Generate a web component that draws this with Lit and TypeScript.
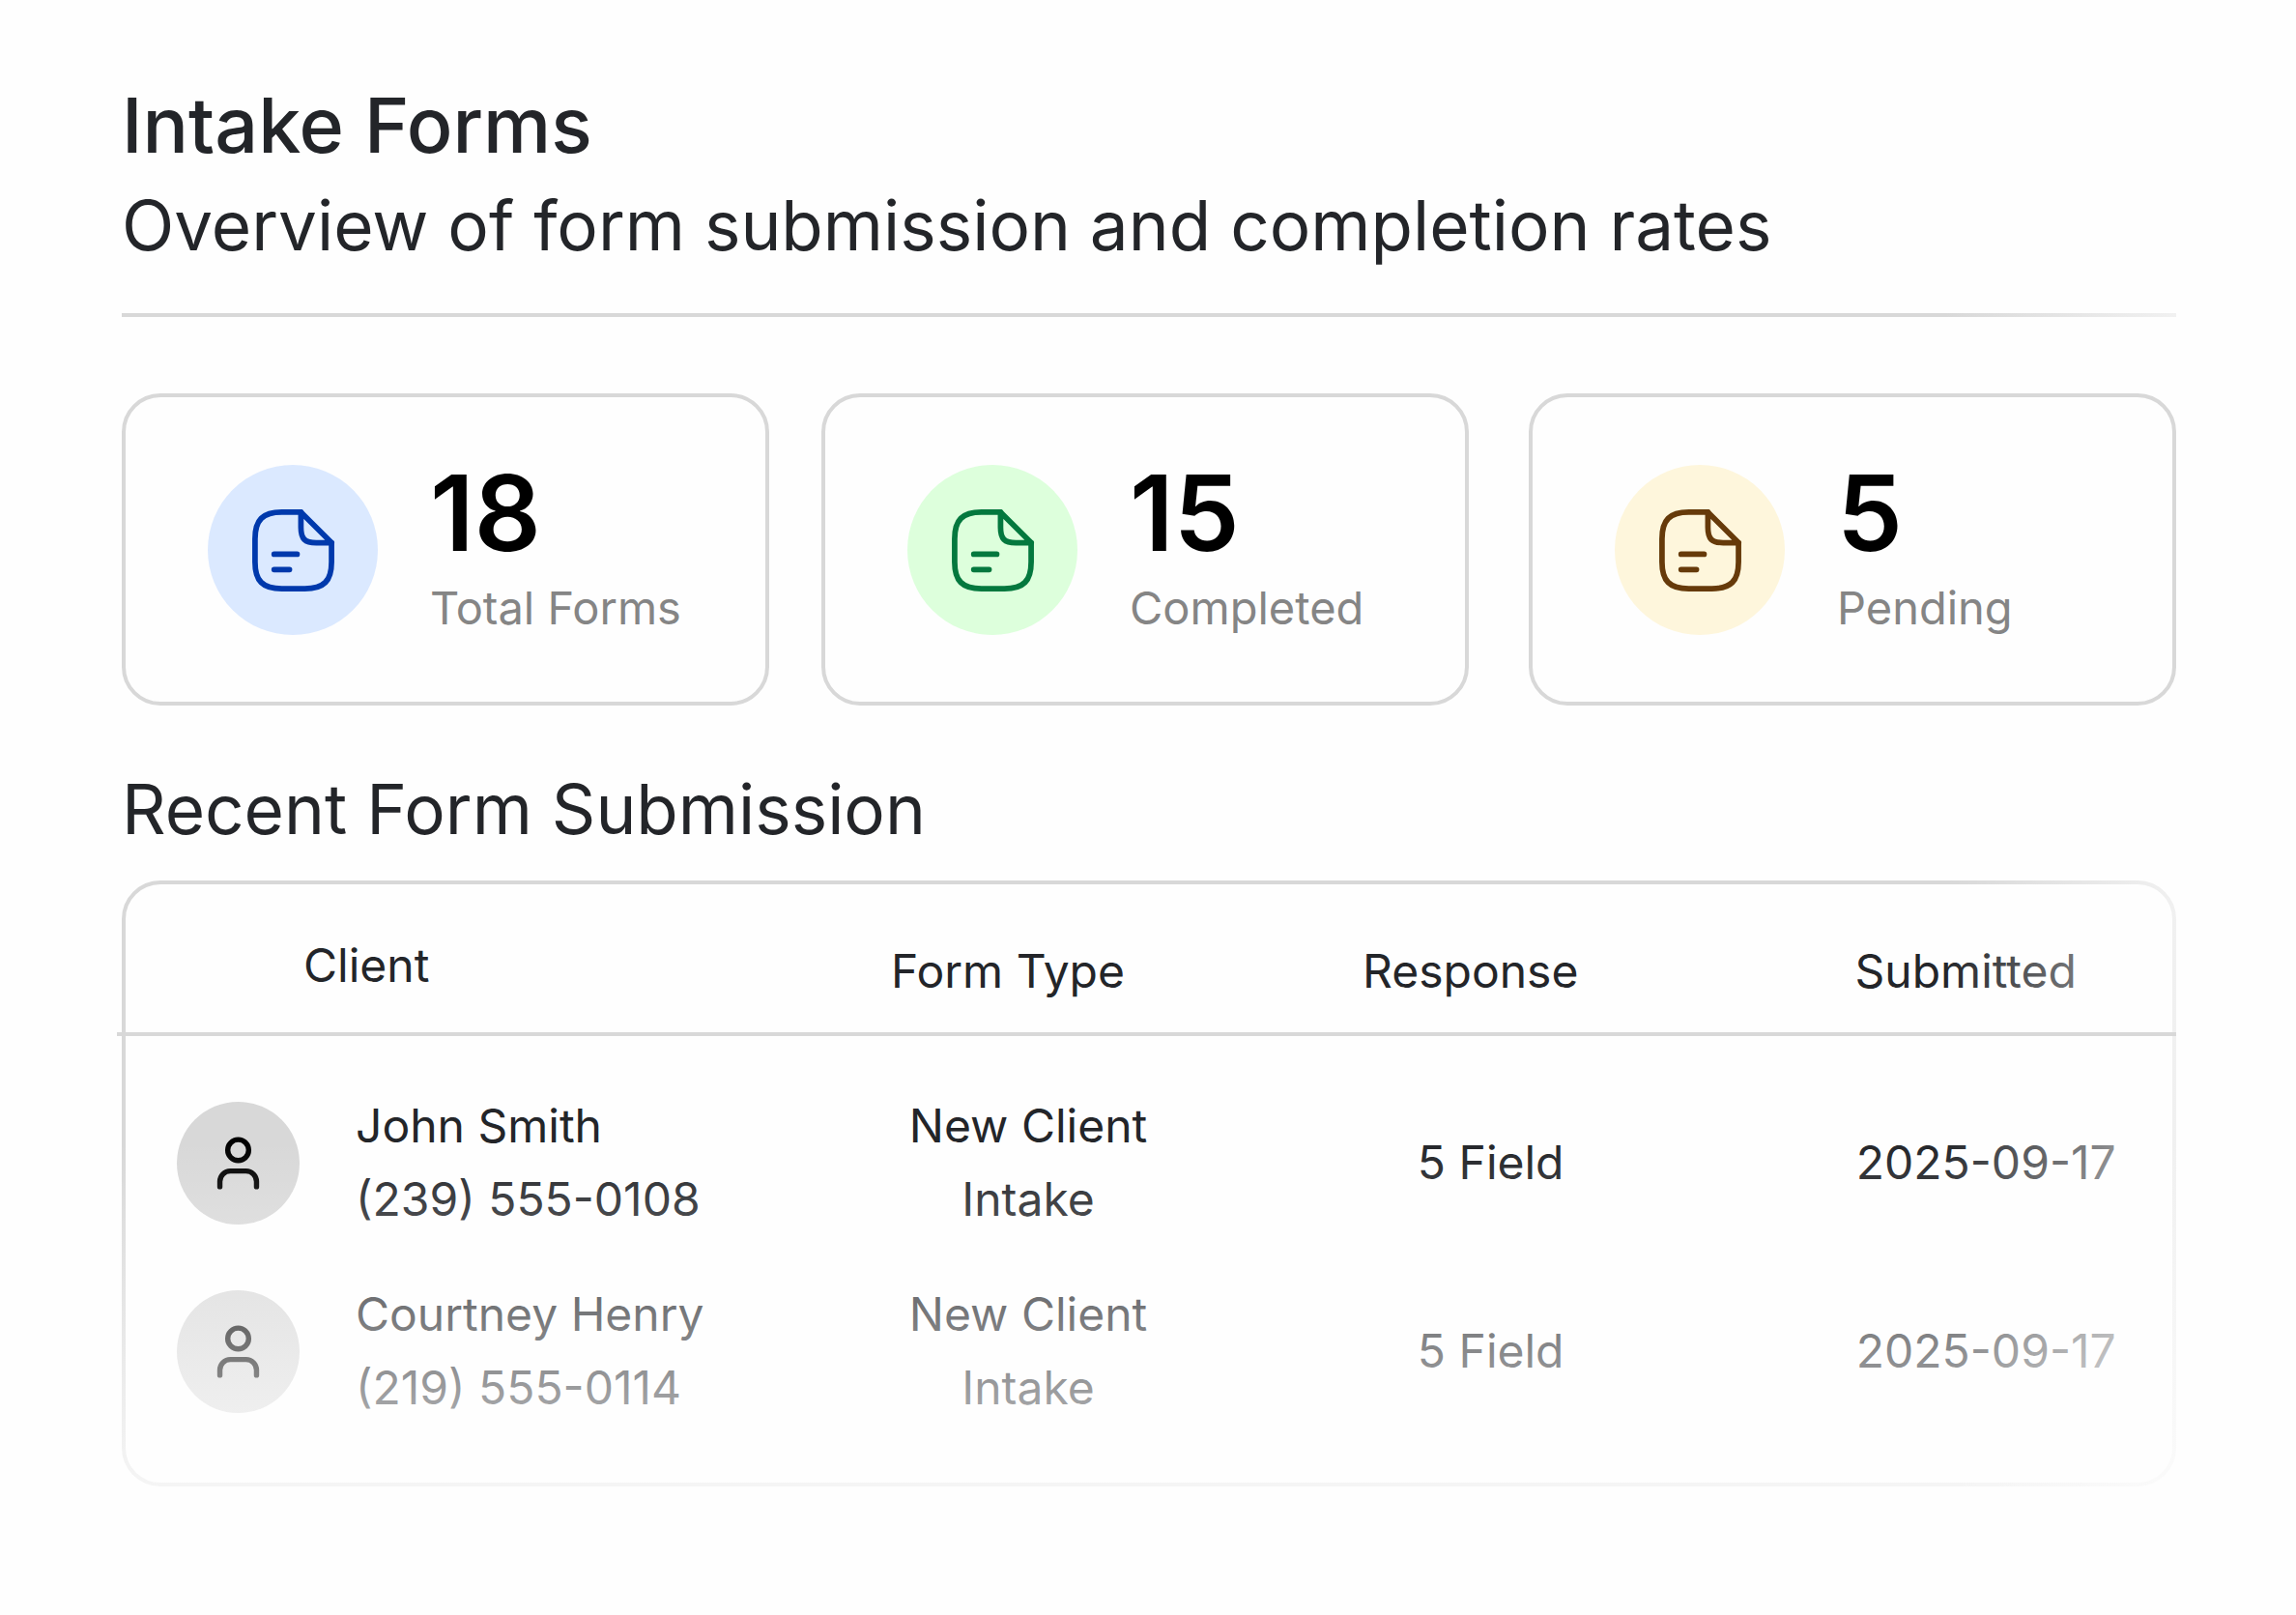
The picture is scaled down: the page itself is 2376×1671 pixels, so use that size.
import { LitElement, html, css } from "lit";
import { customElement, property } from "lit/decorators.js";

type Tone = "blue" | "green" | "amber";

interface Stat {
  value: number;
  label: string;
  tone: Tone;
}

interface Submission {
  name: string;
  phone: string;
  formType: string;
  response: string;
  submitted: string;
}

const STATS: Stat[] = [
  { value: 18, label: "Total Forms", tone: "blue" },
  { value: 15, label: "Completed", tone: "green" },
  { value: 5, label: "Pending", tone: "amber" },
];

const SUBMISSIONS: Submission[] = [
  {
    name: "John Smith",
    phone: "(239) 555-0108",
    formType: "New Client Intake",
    response: "5 Field",
    submitted: "2025-09-17",
  },
  {
    name: "Courtney Henry",
    phone: "(219) 555-0114",
    formType: "New Client Intake",
    response: "5 Field",
    submitted: "2025-09-17",
  },
];

@customElement("stat-card")
export class StatCard extends LitElement {
  @property({ type: Number }) value = 0;
  @property() label = "";
  @property() tone: Tone = "blue";

  static styles = css`
    :host {
      display: block;
    }
    .card {
      display: flex;
      align-items: center;
      gap: 54px;
      padding: 60px 85px 59px;
      border: 4px solid #d8d8d8;
      border-radius: 40px;
    }
    .badge {
      display: flex;
      flex: none;
      align-items: center;
      justify-content: center;
      width: 176px;
      height: 176px;
      border-radius: 50%;
    }
    .blue {
      background: #dbe9ff;
      color: #0039ac;
    }
    .green {
      background: #ddffdc;
      color: #04783e;
    }
    .amber {
      background: #fef6dc;
      color: #663a0a;
    }
    .icon {
      width: 95px;
      height: 95px;
      fill: none;
      stroke: currentColor;
      stroke-width: 1.45;
      stroke-linecap: round;
      stroke-linejoin: round;
    }
    .value,
    .label {
      margin: 0;
      white-space: nowrap;
    }
    .value {
      color: #000;
      font-size: 108px;
      font-weight: 600;
      line-height: 120px;
    }
    .label {
      color: #858585;
      font-size: 47px;
      line-height: 76px;
    }
  `;

  render() {
    return html`
      <article class="card">
        <span class="badge ${this.tone}">
          <svg class="icon" viewBox="0 0 24 24" aria-hidden="true">
            <path d="M22 10v5c0 5-2 7-7 7H9c-5 0-7-2-7-7V9c0-5 2-7 7-7h5" />
            <path d="M22 10h-4c-3 0-4-1-4-4V2l8 8z" />
            <path d="M7 13h6M7 17h4" />
          </svg>
        </span>
        <div>
          <p class="value">${this.value}</p>
          <p class="label">${this.label}</p>
        </div>
      </article>
    `;
  }
}

@customElement("submission-table")
export class SubmissionTable extends LitElement {
  @property({ attribute: false }) rows: Submission[] = [];

  static styles = css`
    :host {
      display: block;
    }
    .panel {
      position: relative;
      padding-bottom: 60px;
      border: 4px solid #d8d8d8;
      border-radius: 40px;
    }
    /* Fades the panel out towards its right and bottom edges. */
    .panel::after {
      content: "";
      position: absolute;
      inset: -4px;
      pointer-events: none;
      background:
        linear-gradient(to right, rgba(254, 254, 254, 0) calc(100% - 239px), rgba(254, 254, 254, 0.65) 100%),
        linear-gradient(to bottom, rgba(254, 254, 254, 0) calc(100% - 357px), rgba(254, 254, 254, 0.76) 100%);
    }
    .table {
      width: 100%;
      border-collapse: collapse;
      table-layout: fixed;
      font-size: 48px;
      line-height: 76px;
    }
    .col-client {
      width: 36.6%;
    }
    .col-type {
      width: 15%;
    }
    .col-response {
      width: 30.2%;
    }
    .col-date {
      width: 18.2%;
    }
    .head {
      position: relative;
    }
    /* Header rule, kept above the fade. */
    .head::after {
      content: "";
      position: absolute;
      z-index: 1;
      left: -9px;
      right: -4px;
      bottom: 0;
      height: 4px;
      background: #d8d8d8;
    }
    .th {
      box-sizing: border-box;
      height: 157px;
      padding: 46px 42px 29px 0;
      font-weight: 400;
      text-align: center;
      vertical-align: bottom;
      white-space: nowrap;
    }
    .th-client {
      padding-left: 184px;
      text-align: left;
      vertical-align: top;
    }
    .td {
      padding: 43px 0 0;
      text-align: center;
      vertical-align: middle;
    }
    .row:first-child .td {
      padding-top: 55px;
    }
    .client {
      display: flex;
      align-items: center;
      gap: 58px;
      padding-left: 53px;
      text-align: left;
      white-space: nowrap;
    }
    .avatar {
      display: flex;
      flex: none;
      align-items: center;
      justify-content: center;
      width: 127px;
      height: 127px;
      border-radius: 50%;
      background: #d8d8d8;
      color: #000;
    }
    .icon {
      width: 65px;
      height: 65px;
      fill: none;
      stroke: currentColor;
      stroke-width: 2;
      stroke-linecap: round;
      stroke-linejoin: round;
    }
    .line {
      display: block;
    }
  `;

  render() {
    return html`
      <div class="panel">
        <table class="table">
          <colgroup>
            <col class="col-client" />
            <col class="col-type" />
            <col class="col-response" />
            <col class="col-date" />
          </colgroup>
          <thead>
            <tr class="head">
              <th class="th th-client" scope="col">Client</th>
              <th class="th" scope="col">Form Type</th>
              <th class="th" scope="col">Response</th>
              <th class="th" scope="col">Submitted</th>
            </tr>
          </thead>
          <tbody>
            ${this.rows.map(
              (row) => html`
                <tr class="row">
                  <td class="td">
                    <div class="client">
                      <span class="avatar">
                        <svg class="icon" viewBox="0 0 24 24" aria-hidden="true">
                          <path d="M19 21v-2a4 4 0 0 0-4-4H9a4 4 0 0 0-4 4v2" />
                          <circle cx="12" cy="7" r="4" />
                        </svg>
                      </span>
                      <div>
                        <span class="line">${row.name}</span>
                        <span class="line">${row.phone}</span>
                      </div>
                    </div>
                  </td>
                  <td class="td">${row.formType}</td>
                  <td class="td">${row.response}</td>
                  <td class="td">${row.submitted}</td>
                </tr>
              `,
            )}
          </tbody>
        </table>
      </div>
    `;
  }
}

@customElement("app-root")
export class AppRoot extends LitElement {
  static styles = css`
    :host {
      display: block;
      box-sizing: border-box;
      min-height: 100vh;
      padding: 77px 124px 77px 126px;
      background: #fefefe;
      color: #232529;
      font-family: Inter, "Liberation Sans", sans-serif;
    }
    .title,
    .subtitle,
    .section-title {
      margin: 0;
      line-height: 104px;
    }
    .title {
      font-size: 79px;
      font-weight: 500;
    }
    .subtitle,
    .section-title {
      font-size: 71px;
      font-weight: 400;
    }
    .rule {
      height: 4px;
      margin: 39px 0 79px;
      border: 0;
      background: linear-gradient(to right, #d8d8d8 calc(100% - 239px), #f1f1f1 100%);
    }
    .stats {
      display: flex;
      gap: 54px;
    }
    .stat {
      flex: 1;
    }
    .stat:last-child {
      margin-left: 8px;
    }
    .section-title {
      margin: 55px 0 22px;
    }
  `;

  render() {
    return html`
      <main>
        <header>
          <h1 class="title">Intake Forms</h1>
          <p class="subtitle">Overview of form submission and completion rates</p>
        </header>
        <hr class="rule" />
        <section class="stats" aria-label="Form totals">
          ${STATS.map(
            (stat) => html`
              <stat-card class="stat" .value=${stat.value} .label=${stat.label} .tone=${stat.tone}></stat-card>
            `,
          )}
        </section>
        <section>
          <h2 class="section-title">Recent Form Submission</h2>
          <submission-table .rows=${SUBMISSIONS}></submission-table>
        </section>
      </main>
    `;
  }
}
